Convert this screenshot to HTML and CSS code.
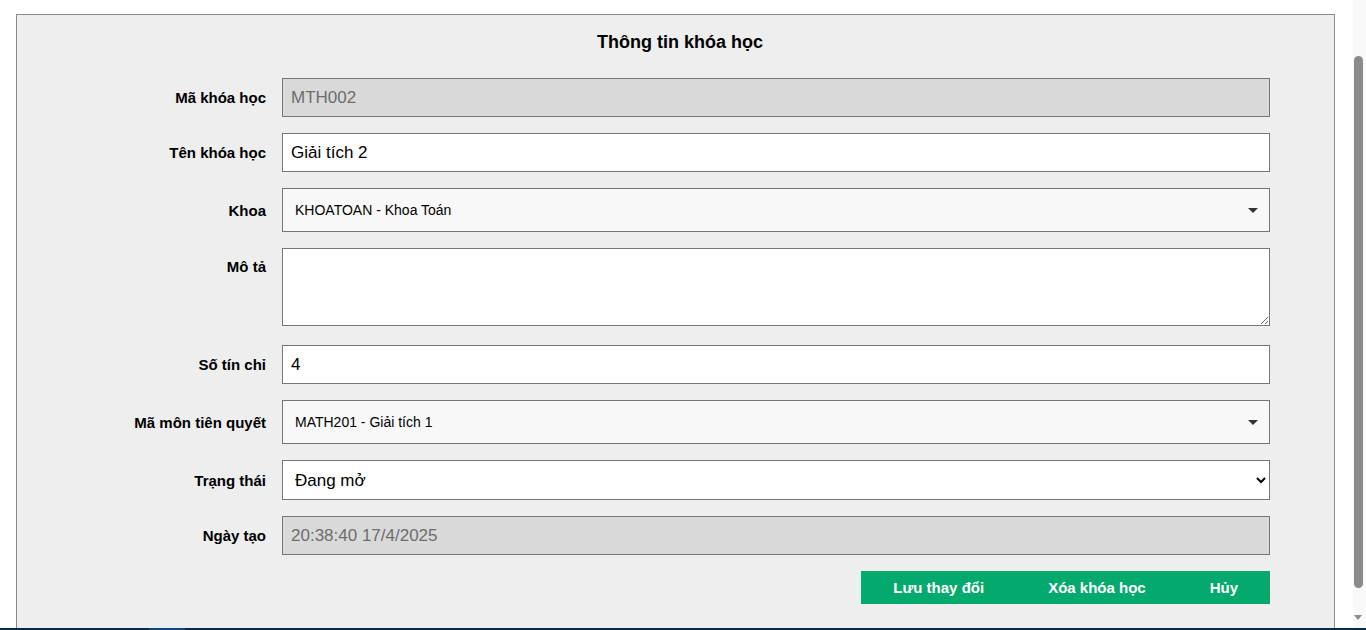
FILE: index.html
```html
<!DOCTYPE html>
<html lang="vi">
<head>
<meta charset="utf-8">
<title>Thông tin khóa học</title>
<link rel="stylesheet" href="styles.css">
</head>
<body>
<div class="page">
  <form class="card">
    <h2 class="card-title">Thông tin khóa học</h2>

    <div class="row">
      <label class="row-label">Mã khóa học</label>
      <input class="field field-disabled" type="text" value="MTH002" disabled>
    </div>

    <div class="row">
      <label class="row-label">Tên khóa học</label>
      <input class="field" type="text" value="Giải tích 2">
    </div>

    <div class="row">
      <label class="row-label">Khoa</label>
      <div class="picker">
        <span class="picker-value">KHOATOAN - Khoa Toán</span>
        <svg class="picker-arrow" width="10" height="5" viewBox="0 0 10 5"><polygon points="0,0 10,0 5,5" fill="#333"/></svg>
      </div>
    </div>

    <div class="row row-top">
      <label class="row-label">Mô tả</label>
      <textarea class="field area"></textarea>
    </div>

    <div class="row">
      <label class="row-label">Số tín chỉ</label>
      <input class="field" type="text" value="4">
    </div>

    <div class="row">
      <label class="row-label">Mã môn tiên quyết</label>
      <div class="picker">
        <span class="picker-value">MATH201 - Giải tích 1</span>
        <svg class="picker-arrow" width="10" height="5" viewBox="0 0 10 5"><polygon points="0,0 10,0 5,5" fill="#333"/></svg>
      </div>
    </div>

    <div class="row">
      <label class="row-label">Trạng thái</label>
      <select class="field native-select">
        <option>Đang mở</option>
        <option>Đã đóng</option>
      </select>
    </div>

    <div class="row">
      <label class="row-label">Ngày tạo</label>
      <input class="field field-disabled" type="text" value="20:38:40 17/4/2025" disabled>
    </div>

    <div class="actions">
      <button type="button" class="btn">Lưu thay đổi</button>
      <button type="button" class="btn">Xóa khóa học</button>
      <button type="button" class="btn">Hủy</button>
    </div>
  </form>
</div>
<div class="scrollbar" aria-hidden="true">
  <span class="scrollbar-thumb"></span>
  <span class="scrollbar-arrow"></span>
</div>
<div class="taskbar"><span class="taskbar-active"></span></div>
</body>
</html>
```

FILE: styles.css
```css
html, body {
  margin: 0;
  padding: 0;
}

body {
  background: #ffffff;
  font-family: "Liberation Sans", Arial, sans-serif;
  color: #000;
}

.page {
  padding: 14px 31px 30px 16px;
}

.card {
  background: #eeeeee;
  border: 1px solid #8a8a8a;
  padding: 17px 64px 24px;
}

.card-title {
  margin: 0 0 25px;
  padding-left: 9px;
  text-align: center;
  font-size: 18px;
  line-height: 21px;
  font-weight: bold;
}

.row {
  display: flex;
  align-items: center;
  gap: 16px;
  margin-bottom: 16px;
}

.row-top {
  align-items: flex-start;
}

.row-label {
  flex: 0 0 185px;
  text-align: right;
  font-weight: bold;
  font-size: 15px;
  line-height: 17px;
}

.row-top .row-label {
  padding-top: 10px;
}

.field {
  flex: 1;
  box-sizing: border-box;
  height: 39px;
  margin: 0;
  padding: 0 8px;
  border: 1px solid #767676;
  border-radius: 0;
  background: #ffffff;
  font-family: "Liberation Sans", Arial, sans-serif;
  font-size: 17px;
  color: #000;
  outline: none;
}

.field-disabled {
  background: #d9d9d9;
  color: #6d6d6d;
  -webkit-text-fill-color: #6d6d6d;
}

.area {
  display: block;
  height: 78px;
  margin-bottom: 3px;
  padding: 6px 8px;
  resize: vertical;
}

.native-select {
  height: 40px;
  padding: 0 6px 0 8px;
}

.picker {
  flex: 1;
  box-sizing: border-box;
  height: 44px;
  display: flex;
  align-items: center;
  justify-content: space-between;
  padding: 0 11px 0 12px;
  background: #f8f8f8;
  border: 1px solid #767676;
  font-size: 14px;
}

.picker-arrow {
  display: block;
}

.actions {
  display: flex;
  justify-content: flex-end;
}

.btn {
  height: 33px;
  padding: 0 32px;
  margin: 0;
  border: 0;
  border-radius: 0;
  background: #04aa6d;
  color: #ffffff;
  font-family: "Liberation Sans", Arial, sans-serif;
  font-size: 15px;
  font-weight: bold;
  cursor: pointer;
}

/* classic window scrollbar drawn over the right edge */
.scrollbar {
  position: fixed;
  top: 0;
  right: 0;
  bottom: 0;
  width: 15px;
  background: #f9f9f9;
  border-left: 2px solid #ffffff;
  box-sizing: border-box;
}

.scrollbar-thumb {
  position: absolute;
  top: 56px;
  left: 1px;
  width: 9px;
  height: 532px;
  border-radius: 5px;
  background: #8b8b8b;
}

.scrollbar-arrow {
  position: absolute;
  top: 615px;
  left: 1px;
  width: 0;
  height: 0;
  border-left: 4px solid transparent;
  border-right: 4px solid transparent;
  border-top: 5px solid #8b8b8b;
}

.taskbar {
  position: fixed;
  left: 0;
  right: 0;
  bottom: 0;
  height: 2px;
  background: #082b4c;
}

.taskbar-active {
  position: absolute;
  left: 149px;
  top: 0;
  width: 36px;
  height: 2px;
  background: #0c4a7d;
}
```
